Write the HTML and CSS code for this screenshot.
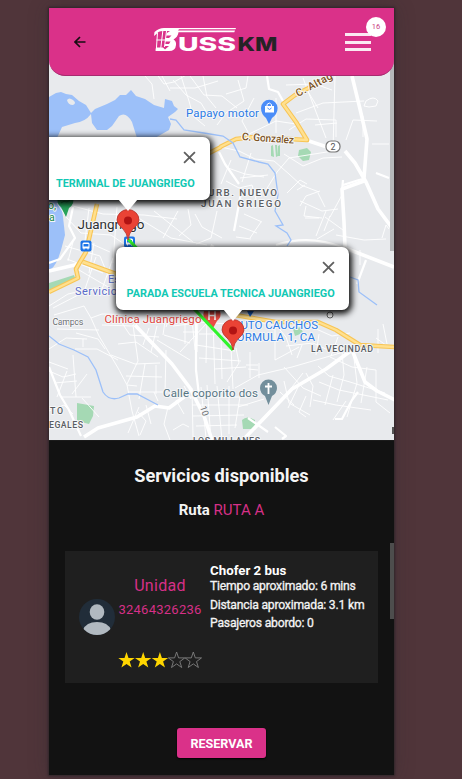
FILE: index.html
```html
<!DOCTYPE html>
<html lang="es">
<head>
<meta charset="utf-8">
<title>BussKM</title>
<link rel="stylesheet" href="styles.css">
</head>
<body>
<main class="phone">
  <header class="topbar">
    <svg class="back" viewBox="0 0 12 12" width="12" height="12"><path d="M6 1 1 6l5 5M1.2 6H11.5"/></svg>
    <svg class="logo" viewBox="154 27 124 26" width="124" height="26">
      <path class="logo-white" d="M164 28H236L235.500 29.300H179L178 30.600H235L234.300 32.300H178.500Q178 37 173.500 39.500 176.500 41 176 45 175.500 51 169 51H155.500L156 47.500H163L165 49.500 169 46H164.500L165 44H169L170.500 41.500H165L165.600 38H169L171.500 35.500H166L167 33 170 31H163Q158 31 156.500 34L154 36 154.500 32Q159 28 164 28Z"/>
      <path class="logo-frame" d="M157.500 32.500 156.300 50M162.800 31 160.800 48M156.500 40H166M166.500 31 164.500 47"/>
      <text class="logo-text logo-white" x="178" y="51" textLength="58" lengthAdjust="spacingAndGlyphs">USS</text>
      <text class="logo-text logo-dark" x="237.500" y="51" textLength="40" lengthAdjust="spacingAndGlyphs">KM</text>
    </svg>
    <div class="menu"><i></i><i></i><i></i><span class="badge">16</span></div>
  </header>

  <section class="map">
    <svg class="map-art" viewBox="49 60 345 380" width="345" height="380">
      <rect x="49" y="60" width="345" height="380" fill="#e8eaed"/>
      <g fill="#9cc0f9">
        <path fill-rule="evenodd" d="M49 97 56 93 61 92 66 94 72 95 79 101 86 105 91 113 95 109 107 104 115 100 120 95 126 95 131 90 136 96 145 99 154 105 164 108 165 99 172 101 174 106 178 109 175 112 168 117 171 124 169 130 155 138H137L132 122Q126 111 119 116L112 126 107 130H97L92 123 91 114Q85 122 75 123L62 127 57 138H49ZM67 100Q69 97 73 100T73 105Q68 105 67 100Z"/>
        <path d="M49 196H60L63 217 65 235 61 250 58 259Q53 270 49 269Z"/>
      </g>
      <g fill="#a5d9b4">
        <path d="m299 150 8-2 4 4-2 8-6 1-5-5zM271 146l2-1 1 12-3-1zM275 145l2 0 1 11-2 1zM278 146l2-1v11l-2 0zM77 403l17 3-1 10-4 8-12-3zM242 420q5-5 13 0v9h-12zM49 283l25-8 2 5-27 11zM293 329l8-2 2 6-8 3z"/>
      </g>
      <g class="road thin">
        <path d="M145 76 152 84 154 99M156 73 164 84 174 82 188 74M173 80 186 95 201 103 210 118M181 76 189 101 193 116 205 126M170 88 195 88 218 81M162 76 170 91M190 76 204 95 222 96 237 108M203 76 207 97 216 108M226 94 246 88 248 76M238 80 244 101 226 113 217 125M254 98 242 121 248 132M276 98V133M249 134 276 121 296 124M289 130 306 119 336 120 336 137M303 78 326 138M335 76 333 150M286 85 315 84 332 90M296 113 323 103 364 101M307 90 318 108M315 125 337 123M346 140 353 120 377 121M363 137 363 116M372 144 389 144M366 101q8-6 12 0l-2 5q-8 2-12 0z"/>
        <path d="M221 147 239 151 255 159 274 161 289 174 301 185 319 192M266 190 277 172 289 158 333 151M284 154 303 166 323 158 342 157M228 168 245 174 264 177M231 160 221 184M251 153 242 182M240 178 268 175M287 193 300 180 307 184M300 206 306 196 320 191M297 190 305 185M226 181 239 188 252 185 256 199"/>
        <path d="M57 203 67 218 81 233 111 235 127 246M73 206 103 214 144 215 177 219M89 208 85 241 110 252M117 207 113 263M132 214 171 238 207 245M154 211 193 242M178 211 163 238M188 209 191 225 179 236M195 214 202 227 222 238M217 211 211 238 196 244M65 246 100 256 109 278M67 259 103 273M73 242 68 261M94 243 89 273M79 270 115 291 138 288M96 257 84 292 53 308M113 258 100 295"/>
        <path d="M49 306 68 294 95 288 131 294 165 304M54 315 84 306 91 318 102 314 136 315M91 318 99 336 118 368 127 385 137 386M76 333 98 339 105 349M49 349 66 338 87 339M57 329 99 330M75 349 97 349 118 360M83 347V339M102 325 133 326 137 319M118 317 130 335 159 337M118 344 136 342 158 357M111 355 135 364 160 363M133 325 138 361 127 384M126 376 162 377M128 392 167 392M145 364 139 399M156 365V394M166 350 165 393M149 328 143 345M157 326 151 352M165 321 163 335M170 316 166 327M157 340 190 360M164 335 190 343M173 326 198 323M185 319V344M192 319 195 350M206 324 180 352M183 332 198 332"/>
        <path d="M49 371 63 377 76 374M54 383 77 381M67 371 57 397M73 355 76 397M49 362 68 369M87 374 72 394M61 397 91 397M82 398 99 417M127 385 132 411 139 436M139 407 128 433M138 412 146 421 140 435M146 405 151 424M168 407 164 424 170 440M176 400 184 414M184 386 191 399M154 392 158 401M192 388 193 437M201 387 206 438M217 386 222 440M189 397 247 397M192 405 248 405M193 416 244 415M196 426 237 425M207 385 211 440M229 386V434M241 390 235 428M173 430 183 424 189 427M49 411 64 405 73 414M49 422 71 424"/>
        <path d="M198 314 197 352M207 312 206 363M213 320 215 384M221 334 222 379M231 347 233 389M198 322 228 324M199 334 226 334M196 345 235 351M199 358 241 361M214 369 246 367M236 348 239 363 227 382M250 352V378M259 363V378M248 369 258 370M246 365 258 365M252 322 275 324 286 337 292 355M275 323 275 360 299 347M235 388 258 375 292 367 337 354 368 344M286 346 313 343 328 350M302 345 297 358M305 324 332 336 350 333M319 334 316 355M338 337 331 356M238 407 264 399M284 381 289 403 310 415M284 367 303 388 321 396M303 373 289 391M306 373 313 386 310 407M318 366 329 376 350 382 385 393M330 357 352 367 376 370M342 352 344 375 337 402M353 350 357 383 347 417M367 367 361 403M376 370 376 402 390 413M333 375 325 405M319 382 339 390 388 400M313 400 336 405 371 410M306 396 299 412 306 417M346 401 333 420M300 383 288 408M280 392 294 405"/>
        <path d="M318 193 325 207M300 201 322 211 338 209M306 206 304 216 322 218M326 211 316 236M330 216 324 231M325 217 343 230M342 195 330 217M336 235 364 240 386 239M305 218 319 218M382 238 386 225 389 229M317 239 334 229M261 222 250 238M244 214 262 222M239 226 257 233M236 237 251 239M318 266 342 262M360 265V250M383 324 387 344M376 338 390 348M378 329V353"/>
      </g>
      <g class="road mid">
        <path d="M267 76 269 89 278 92 283 101M49 367 60 395 69 410 81 436M73 207 69 226 75 238 60 259 49 263M234 231 241 193M219 152 225 164 239 184M248 418 268 432M275 427 286 436 282 439M335 419 342 419 352 400 358 392M343 180 342 191M196 321V370L199 395"/>
        <path d="M344 248Q310 234 276 245M366 260 357 284M389 178 376 173M343 185 359 180 363 179"/>
      </g>
      <g class="road main">
        <path d="M352 76 360 109 367 139 364 178M309 141 327 147M345 151 355 163 366 182 378 209 395 232M364 181 342 189 344 222 345 247M345 248 394 267M135 325 172 364 190 388 204 416 212 440M84 437 98 428 137 417 155 406 169 408 188 394M243 440 292 389 326 369 352 350 365 382 377 391 395 400M213 245 202 264M49 271 79 264"/>
      </g>
      <g class="arterial-edge">
        <path d="M220 147 236 139 254 137 307 140 296 122 283 104 295 95 330 77M221 147 180 168M97 204 86 252 80 262 76 269 78 278 49 292M83 262 116 274M235 315 276 322 318 322 336 330 360 345 395 347"/>
      </g>
      <g class="arterial">
        <path d="M220 147 236 139 254 137 307 140 296 122 283 104 295 95 330 77M221 147 180 168M97 204 86 252 80 262 76 269 78 278 49 292M83 262 116 274M235 315 276 322 318 322 336 330 360 345 395 347"/>
      </g>
      <g class="river">
        <path d="M170 119 176 120 184 130 204 133 223 136 233 143 240 157 259 162 268 164 275 173 278 195 275 211 283 225 276 226 287 233 291 240 287 246M350 277 358 280 359 292 377 305M49 336 59 344 74 350 88 357 96 370 103 392Q109 401 119 398L128 394H137L158 405"/>
      </g>

      <g class="poi">
        <text x="186" y="117" textLength="73">Papayo motor</text>
        <text x="75" y="295" textLength="42" class="violet">Servicio</text>
        <text x="108" y="283" class="violet">Es</text>
        <text x="104.500" y="322.500" textLength="97" class="red">Clínica Juangriego</text>
        <text x="233" y="329" textLength="85">AUTO CAUCHOS</text>
        <text x="230" y="341" textLength="85">FORMULA 1, CA</text>
        <text x="163" y="396.500" textLength="95" class="slate">Calle coporito dos</text>
        <text x="48" y="208.500" class="green">o,</text>
        <text x="49" y="221" class="green">a</text>
      </g>
      <g class="area">
        <text x="208" y="195.500" textLength="69">URB. NUEVO</text>
        <text x="201" y="207" textLength="80">JUAN GRIEGO</text>
        <text class="small" x="311" y="352" textLength="62">LA VECINDAD</text>
        <text class="small" x="50" y="414" textLength="13">TO</text>
        <text class="small" x="49" y="428" textLength="34">EGALES</text>
        <text class="small" x="193" y="444" textLength="67">LOS MILLANES</text>
      </g>
      <text class="town" x="77.500" y="229" textLength="67">Juangriego</text>
      <g class="street">
        <text x="242" y="140" textLength="52" transform="rotate(4 242 138)">C. Gonzalez</text>
        <text x="298" y="97" textLength="40" transform="rotate(-28 298 97)">C. Altag</text>
        <text class="grey" x="52.500" y="325" textLength="31">Campos</text>
        <text class="grey" x="200" y="407" transform="rotate(72 200 407)">10</text>
      </g>
      <rect x="326" y="141" width="14" height="11" rx="5" fill="#fff" stroke="#777" stroke-width="1.200"/>
      <text class="shield" x="333" y="150">2</text>
      <circle cx="330" cy="315" r="3" fill="#fff" stroke="#666"/>
      <path d="M392 427h2v7h-2z" fill="#555"/>

      <path d="M269 124 266 118Q261 114 261 108A8.300 8.300 0 0 1 277.600 108Q277.600 114 272 118Z" fill="#4b8df8"/>
      <path d="M265 106h9v6.500h-9z" fill="#fff"/>
      <path d="M267 106v-1.500q2.300-3 4.500 0v1.500" stroke="#fff"/>
      <path d="M267.500 108q2 3 4 0" stroke="#4b8df8"/>
      <path d="M268.500 405 265 396Q260 393 260 388A8.500 8.500 0 0 1 277 388Q277 393 272 396Z" fill="#738f9c"/>
      <path d="M268.500 383v11M265 386.500h7" stroke="#fff" stroke-width="1.800"/>
      <path d="M66 217 61 207Q56 203 58 197H73Q75 204 69 208Z" fill="#27a35a"/>
      <path d="M61 203q3-3 6-1l3-2" stroke="#14783b"/>
      <path d="M212 330 206 321Q202 317 204 311H220Q222 317 217 321Z" fill="#e94d45"/>
      <path d="M209 311v9M215 311v9M209 315.500h6" stroke="#fff" stroke-width="1.500"/>
      <path d="M250 317 247 311H254Z" fill="#1967d2"/>
      <g id="stop" transform="translate(80.500 240.500)">
        <rect width="11" height="11" rx="2" fill="#1a73e8"/>
        <path d="M3 2h5l1 1v5H8v1H7V8H4v1H3V8H2V3z" fill="#fff"/><path d="M3 3.500h5V6H3z" fill="#1a73e8"/>
      </g>
      <use href="#stop" x="43.500" y="-4"/>
      <path d="M128 239 233 350" stroke="#30f32c" stroke-width="3.200"/>
      <g id="pin" transform="translate(128 240)">
        <path d="M0 0Q-1-7-5-11-11-16-11-20A11 10.500 0 0 1 11-20Q11-16 5-11 1-7 0 0Z" fill="#ea4335" stroke="#b5322c" stroke-width=".8"/>
        <circle cy="-19.500" r="4" fill="#b11313"/>
      </g>
      <use href="#pin" x="105" y="110"/>
    </svg>

    <div class="info info-a">
      <svg class="close" viewBox="0 0 12 12"><path d="m1 1 10 10M11 1 1 11"/></svg>
      <p>TERMINAL DE JUANGRIEGO</p>
    </div>
    <div class="info info-b">
      <svg class="close" viewBox="0 0 12 12"><path d="m1 1 10 10M11 1 1 11"/></svg>
      <p>PARADA ESCUELA TECNICA JUANGRIEGO</p>
    </div>
    <span class="scroll scroll-map"></span>
  </section>

  <section class="services">
    <h1>Servicios disponibles</h1>
    <h2>Ruta <span>RUTA A</span></h2>
    <article class="card">
      <svg class="avatar" viewBox="0 0 36 36" width="36" height="36">
        <clipPath id="round"><circle cx="18" cy="18" r="18"/></clipPath>
        <g clip-path="url(#round)">
          <rect width="36" height="36" fill="#212d39"/>
          <ellipse cx="18" cy="13" rx="7.300" ry="7.800" fill="#b1b9c0"/>
          <path d="M4 31Q7 23 18 23T32 31L28 37H8Z" fill="#b1b9c0"/>
        </g>
      </svg>
      <div class="unit">
        <strong>Unidad</strong>
        <span>32464326236</span>
        <svg class="stars" viewBox="0 0 84 16" width="84" height="16">
          <defs><path id="star" d="m8 0 2 5.900h6.200l-5 3.700 1.900 5.900L8 11.900l-5.100 3.600 1.900-5.900-5-3.700H6z"/></defs>
          <g fill="#ffd600"><use href="#star" x=".5"/><use href="#star" x="17.200"/><use href="#star" x="33.900"/></g>
          <g fill="none" stroke="#808080" stroke-width=".9"><use href="#star" x="50.600"/><use href="#star" x="67.300"/></g>
        </svg>
      </div>
      <div class="details">
        <h3>Chofer 2 bus</h3>
        <p>Tiempo aproximado: 6 mins</p>
        <p class="d2">Distancia aproximada: 3.1 km</p>
        <p class="d3">Pasajeros abordo: 0</p>
      </div>
    </article>
    <button class="reserve">RESERVAR</button>
    <span class="scroll scroll-list"></span>
  </section>
</main>
</body>
</html>
```

FILE: styles.css
```css
* { box-sizing: border-box; }
body { margin: 0; height: 779px; overflow: hidden; padding: 8px 0 0 49px; background: #50353a; font-family: Roboto, "Liberation Sans", sans-serif; }
h1, h2, h3, p { margin: 0; font-weight: 500; white-space: nowrap; }
.phone { width: 345px; height: 767px; display: flex; flex-direction: column; background: #121212; box-shadow: 0 0 2px 1px #30252a, 0 0 18px rgba(40, 40, 45, .35); }

.topbar { position: relative; z-index: 2; flex: none; height: 68px; display: flex; align-items: center; background: #da3189; border-bottom: 1px solid #a72b70; border-radius: 0 0 16px 16px; }
.back { margin-left: 25px; fill: none; stroke: #160d12; stroke-width: 1.7; }
.logo { margin: -4px 0 0 68px; overflow: visible; }
.logo-white { fill: #fff; }
.logo-dark { fill: #252326; }
.logo-frame { fill: none; stroke: #fff; stroke-width: 1; }
.logo-text { font: 800 18.5px Inter, Roboto, sans-serif; }
.menu { position: relative; margin: 1px 0 0 67px; width: 26px; height: 18px; display: flex; flex-direction: column; justify-content: space-between; }
.menu i { height: 3px; background: #fbe9f2; }
.badge { position: absolute; left: 21px; top: -16px; width: 20px; height: 20px; border-radius: 50%; background: #fff; color: #c93b82; font-size: 7.5px; line-height: 20px; text-align: center; }

.map { position: relative; flex: none; height: 380px; margin-top: -16px; overflow: hidden; }
.map-art { display: block; fill: none; }
.road { stroke: #fff; stroke-linejoin: round; }
.thin { stroke-width: .9; }
.mid { stroke-width: 2.2; }
.main { stroke-width: 3.6; }
.arterial-edge { stroke: #f8c555; stroke-width: 4.6; stroke-linejoin: round; }
.arterial { stroke: #ffe08f; stroke-width: 2.4; stroke-linejoin: round; }
.river { stroke: #9cc0f9; stroke-width: 1.3; }
.map text { paint-order: stroke; stroke: #f5f6f8; stroke-width: 2px; stroke-linejoin: round; }
.poi text { fill: #2c7be5; font-size: 11.5px; }
.poi .violet { fill: #5a6bc9; font-size: 11px; }
.poi .red { fill: #e2453c; }
.poi .slate { fill: #567583; }
.poi .green { fill: #188a4b; font-size: 10.5px; }
.area text { fill: #5b5f64; font-size: 9.8px; font-weight: 500; }
.area .small { font-size: 8.8px; }
.town { fill: #2f3133; font-size: 13.5px; }
.street text { fill: #7d5424; font-size: 10.5px; font-weight: 500; }
.street .grey { fill: #6a6d70; font-size: 9px; font-weight: 400; }
.map .shield { fill: #555; stroke: none; font-size: 9px; text-anchor: middle; }

.info { position: absolute; height: 63px; background: #fff; border-radius: 7px; box-shadow: 1px 2px 6px 2px rgba(0, 0, 0, .95); color: #12c8b4; font-size: 10.88px; line-height: 14px; }
.info::after { content: ""; position: absolute; top: 100%; margin-top: -1px; left: var(--tip); width: 20px; height: 12px; background: #fff; clip-path: polygon(0 0, 100% 0, 50% 100%); }
.info-a { left: -24px; top: 77px; width: 185px; --tip: 93px; padding: 40px 0 0 31px; }
.info-b { left: 67px; top: 187px; width: 233px; --tip: 107px; padding: 40px 0 0 10.5px; }
.info p { font-weight: 700; }
.close { position: absolute; right: 14px; top: 14px; width: 13px; height: 13px; fill: none; stroke: #606060; stroke-width: 1.7; }

.scroll { position: absolute; right: 0; width: 4px; }
.scroll-map { top: 0; height: 191px; background: #b5b7ba; }
.scroll-list { top: 102px; height: 76px; background: #4d4d4d; }

.services { position: relative; flex: 1; display: flex; flex-direction: column; align-items: center; color: #f4f4f4; border-top: 1px solid #1b1b1b; }
h1 { margin-top: 23px; font-size: 18.2px; line-height: 24px; font-weight: 700; }
h2 { margin-top: 13px; font-size: 15px; line-height: 18px; font-weight: 700; }
h2 span { color: #d63087; font-weight: 400; }
.card { width: 313px; height: 132px; margin-top: 32px; display: flex; background: #1f1f1f; }
.avatar { flex: none; margin: 48px 0 0 14px; }
.unit { flex: none; width: 84px; margin: 25px 0 0 3px; display: flex; flex-direction: column; align-items: center; color: #d63087; }
.unit strong { font-size: 16px; font-weight: 400; line-height: 20px; letter-spacing: .3px; }
.unit span { margin-top: 5px; font-size: 13px; line-height: 18px; letter-spacing: .25px; }
.stars { margin-top: 33px; overflow: visible; }
.details { margin: 12px 0 0 8px; font-size: 12.2px; line-height: 16px; }
.details p { font-weight: 400; letter-spacing: -.22px; -webkit-text-stroke: .3px #f4f4f4; }
.details h3 { font-size: 13.3px; font-weight: 700; line-height: 15px; color: #fff; }
.details .d2 { margin-top: 3px; }
.details .d3 { margin-top: 2px; }
.reserve { margin-top: 45px; width: 89px; height: 30px; border: 0; border-radius: 3px; background: #da3189; color: #fff; font: 700 12.6px Roboto, sans-serif; padding: 0; box-shadow: 0 1px 2px #000; }
```
